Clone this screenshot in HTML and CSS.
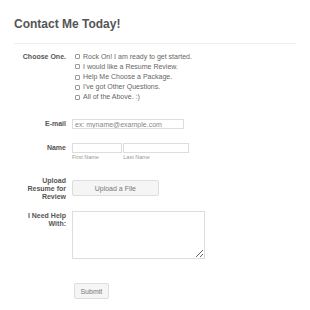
FILE: index.html
```html
<!doctype html>
<html lang="en">
  <head>
    <meta charset="UTF-8" />
    <meta name="viewport" content="width=device-width, initial-scale=1.0" />
    <title>Contact Me Today!</title>
    <link rel="stylesheet" href="styles.css">
  </head>
  <body>
    <div class="container">
      <h1 class="title">Contact Me Today!</h1>

      <form class="contact-form">
        <div class="field field-choose">
          <label class="field-label">Choose One.</label>
          <div class="options">
            <label class="option"><input type="checkbox" /> Rock On! I am ready to get started.</label>
            <label class="option"><input type="checkbox" /> I would like a Resume Review.</label>
            <label class="option"><input type="checkbox" /> Help Me Choose a Package.</label>
            <label class="option"><input type="checkbox" /> I've got Other Questions.</label>
            <label class="option"><input type="checkbox" /> All of the Above. :)</label>
          </div>
        </div>

        <div class="field field-email">
          <label class="field-label" for="email">E-mail</label>
          <input type="email" id="email" class="text-input email-input" placeholder="ex: myname@example.com" />
        </div>

        <div class="field field-name">
          <label class="field-label">Name</label>
          <div class="name-group">
            <div class="name-part">
              <input type="text" class="text-input first-name" />
              <span class="sublabel">First Name</span>
            </div>
            <div class="name-part">
              <input type="text" class="text-input last-name" />
              <span class="sublabel">Last Name</span>
            </div>
          </div>
        </div>

        <div class="field field-upload">
          <label class="field-label">Upload Resume for Review</label>
          <div>
            <button type="button" class="upload-btn">Upload a File</button>
          </div>
        </div>

        <div class="field field-help">
          <label class="field-label" for="help">I Need Help With:</label>
          <div>
            <textarea id="help" class="help-input"></textarea>
          </div>
        </div>

        <div class="field field-submit">
          <span></span>
          <div>
            <button type="submit" class="submit-btn">Submit</button>
          </div>
        </div>
      </form>
    </div>
  </body>
</html>
```

FILE: styles.css
```css
* {
  margin: 0;
  padding: 0;
  box-sizing: border-box;
}

body {
  font-family: "Liberation Sans", Arial, sans-serif;
  background: #fff;
  color: #666;
}

.container {
  padding: 17px 14px 0;
  width: 310px;
}

.title {
  font-size: 12px;
  line-height: 14px;
  font-weight: 700;
  color: #555;
  padding-bottom: 12px;
  border-bottom: 1px solid #eee;
}

.field {
  display: grid;
  grid-template-columns: 52px 1fr;
  column-gap: 6px;
  align-items: start;
}

.field-label {
  font-size: 7px;
  line-height: 8.3px;
  font-weight: 700;
  color: #555;
  text-align: right;
}

.field-choose {
  margin-top: 7.5px;
}

.field-choose .field-label {
  line-height: 10.2px;
}

.options {
  display: flex;
  flex-direction: column;
  padding-left: 3px;
}

.option {
  display: flex;
  align-items: center;
  gap: 3px;
  font-size: 7px;
  line-height: 10.2px;
  color: #666;
}

.option input {
  appearance: none;
  -webkit-appearance: none;
  width: 5px;
  height: 5px;
  border: 1px solid #999;
  border-radius: 1px;
  background: #fff;
}

.field-email {
  margin-top: 16.7px;
}

.field-email .field-label,
.field-name .field-label {
  line-height: 10px;
}

.text-input {
  height: 10px;
  border: 1px solid #ddd;
  font-family: inherit;
  font-size: 7px;
  padding: 0 2px;
  color: #555;
  outline: none;
}

.email-input {
  width: 112px;
}

.email-input::placeholder {
  color: #888;
}

.field-name {
  margin-top: 14px;
}

.name-group {
  display: flex;
  gap: 1.6px;
}

.name-part {
  display: flex;
  flex-direction: column;
}

.first-name {
  width: 49.7px;
}

.last-name {
  width: 65.4px;
}

.sublabel {
  font-size: 5.5px;
  line-height: 5.5px;
  margin-top: 2px;
  color: #999;
}

.field-upload {
  margin-top: 16px;
}

.upload-btn {
  width: 86.7px;
  height: 15.6px;
  margin-top: 0.2px;
  font-family: inherit;
  font-size: 7px;
  color: #777;
  background: #f5f5f5;
  border: 1px solid #ddd;
  border-radius: 2px;
}

.field-help {
  margin-top: 10px;
}

.help-input {
  display: block;
  width: 133.4px;
  height: 48.4px;
  margin-top: -0.6px;
  border: 1px solid #ddd;
  font-family: inherit;
  font-size: 7px;
  outline: none;
}

.field-submit {
  margin-top: 20.3px;
}

.submit-btn {
  margin-left: 2px;
  width: 34.7px;
  height: 16px;
  font-family: inherit;
  font-size: 7px;
  color: #777;
  background: #f5f5f5;
  border: 1px solid #ddd;
  border-radius: 2px;
}
```
